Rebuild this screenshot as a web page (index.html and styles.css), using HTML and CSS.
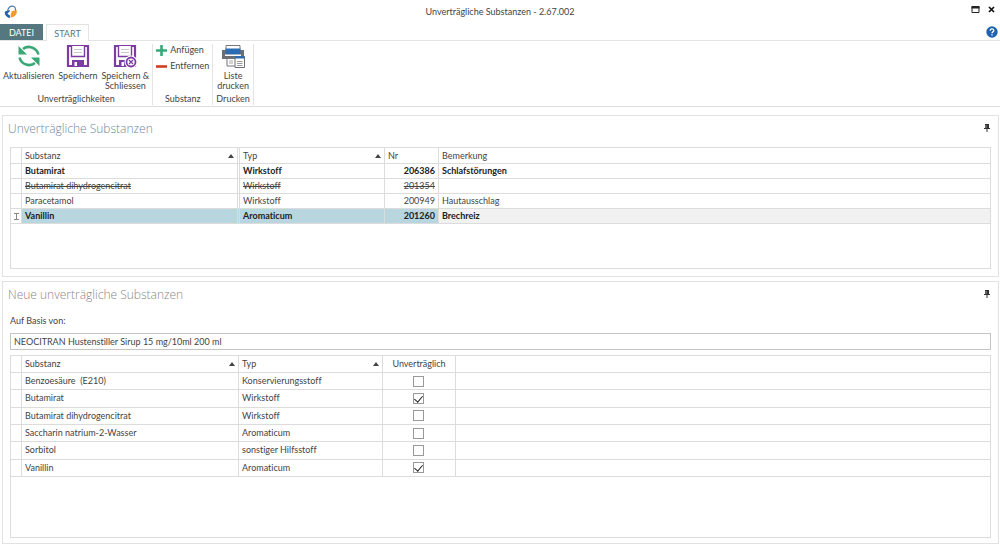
FILE: index.html
```html
<!DOCTYPE html>
<html lang="de">
<head>
    <meta charset="UTF-8">
    <title>Unverträgliche Substanzen</title>
    <link rel="stylesheet" href="styles.css">
</head>
<body>
<header class="titlebar">
    <svg class="app-logo" viewBox="0 0 14 14">
        <path d="M3.500 6.500C4 3.500 6 1.200 8.500 1.200c2.500 0 3.300 2 3 5" fill="none" stroke="#4f7ca8" stroke-width="1.200"/>
        <path d="M.8 6.500l5-1.500.2 8c-3.500-.8-5.500-3-5.200-6.500z" fill="#2463a8"/>
        <path d="M7 6.500L12.500 5c1.200 4-1.500 7-6 7.500z" fill="#f29a2e"/>
        <path d="M3.500 8.500l2-2 2.500.5-2.500 3.500z" fill="#fff"/>
    </svg>
    <h1>Unverträgliche Substanzen - 2.67.002</h1>
    <div class="window-buttons">
        <button type="button" aria-label="Maximieren"><svg viewBox="0 0 9 7"><path d="M1 1h7v5.500H1z" fill="#fff" stroke="#222"/><path d="M.5 0h8v2.500h-8z" fill="#222"/></svg></button>
        <button type="button" aria-label="Schliessen"><svg viewBox="0 0 9 7"><path d="M2 1l5 5M7 1L2 6" stroke="#111" stroke-width="1.700"/></svg></button>
    </div>
</header>
<nav class="tabs">
    <a class="tab tab-file" href="#">DATEI</a>
    <a class="tab tab-start" href="#">START</a>
    <button class="help" type="button" aria-label="Hilfe"><svg viewBox="0 0 12 12"><circle cx="6" cy="6" r="5.700" fill="#1f62ad"/><path d="M4.200 4.700C4.200 2.400 7.800 2.400 7.800 4.600 7.800 5.900 6 5.900 6 7.300M6 8.200v1.300" fill="none" stroke="#fff" stroke-width="1.300"/></svg></button>
</nav>
<div class="ribbon">
    <section class="group">
        <div class="group-tools">
            <button class="tool tool-refresh" type="button">
                <svg viewBox="0 0 24 24"><g fill="none" stroke="#3aa876" stroke-width="2.600"><path d="M6 5c5-4 13.500-2 15.500 5.500"/><path d="M18 19c-5 4-13.500 2-15.500-5.500"/></g><path d="M1.500 2v8.500H10L7 7.500l-2-2z" fill="#3aa876"/><path d="M22.500 22v-8.500H14l3 3 2 2z" fill="#3aa876"/></svg>
                Aktualisieren
            </button>
            <button class="tool tool-save" type="button">
                <svg viewBox="0 0 24 24"><path d="M2 2h20v20H2z" fill="#fff" stroke="#7d3ba4" stroke-width="2.200"/><path d="M5.500 2v10.500h13V2" fill="#fff" stroke="#7d3ba4" stroke-width="1.400"/><path d="M8 5.500h8M8 8.500h8" stroke="#c9c9c9"/><path d="M6 16h12v7H6z" fill="#7d3ba4"/><path d="M8.500 18H11v4H8.500z" fill="#fff"/></svg>
                Speichern
            </button>
            <button class="tool tool-save-close" type="button">
                <svg viewBox="0 0 24 24"><path d="M2 2h20v20H2z" fill="#fff" stroke="#7d3ba4" stroke-width="2.200"/><path d="M5.500 2v10.500h13V2" fill="#fff" stroke="#7d3ba4" stroke-width="1.400"/><path d="M8 5.500h8M8 8.500h8" stroke="#c9c9c9"/><path d="M6 16h9v7H6z" fill="#7d3ba4"/><path d="M8.500 18H11v4H8.500z" fill="#fff"/><circle cx="18" cy="18" r="6.500" fill="#fff"/><circle cx="18" cy="18" r="4.500" fill="#fff" stroke="#7d3ba4" stroke-width="1.800"/><path d="M16 16l4 4m0-4l-4 4" stroke="#7d3ba4" stroke-width="1.300"/></svg>
                Speichern &amp;<br>Schliessen
            </button>
        </div>
        <h2>Unverträglichkeiten</h2>
    </section>
    <section class="group">
        <div class="group-tools group-list">
            <button class="tool-small" type="button"><svg viewBox="0 0 11 11"><path d="M5.500 0v11M0 5.500h11" stroke="#3aa876" stroke-width="2.600"/></svg>Anfügen</button>
            <button class="tool-small" type="button"><svg viewBox="0 0 11 11"><path d="M0 5.500h11" stroke="#cf3f22" stroke-width="2.600"/></svg>Entfernen</button>
        </div>
        <h2>Substanz</h2>
    </section>
    <section class="group">
        <div class="group-tools">
            <button class="tool tool-print" type="button">
                <svg viewBox="0 0 24 24"><path d="M5 1.500h14v5H5z" fill="#fff" stroke="#777"/><path d="M1 6h22v9H1z" fill="#6b6f73"/><path d="M4.500 4.500h15v6h-15z" fill="#2c6cb5"/><path d="M4 10.500h16v1.500H4z" fill="#fff"/><path d="M6 14.500h9V22H6z" fill="#fff" stroke="#777"/><path d="M8 17h4M8 19h4" stroke="#aaa"/><path d="M14 12.500h9.500v11H14z" fill="#fff" stroke="#6b6f73"/><path d="M14 12h9.500v2.500H14z" fill="#2c6cb5"/><path d="M16 17.500h5.500M16 19.500h5.500M16 21.500h5.500" stroke="#999"/></svg>
                Liste<br>drucken
            </button>
        </div>
        <h2>Drucken</h2>
    </section>
</div>
<main>
    <section class="panel panel-known">
        <div class="panel-head">
            <h2>Unverträgliche Substanzen</h2>
            <button class="pin" type="button" aria-label="Anheften"><svg viewBox="0 0 6 8"><path d="M1 0h4v4h1v1H0V4h1z" fill="#333"/><path d="M3 5v3" stroke="#333"/><path d="M2 1v3" stroke="#999"/></svg></button>
        </div>
        <div class="grid">
            <table class="known">
                <colgroup><col class="col-mark"><col class="col-name"><col class="col-type"><col class="col-nr"><col></colgroup>
                <thead>
                <tr><th></th><th class="sorted">Substanz</th><th class="sorted">Typ</th><th>Nr</th><th>Bemerkung</th></tr>
                </thead>
                <tbody>
                <tr class="strong"><td></td><td>Butamirat</td><td>Wirkstoff</td><td class="nr">206386</td><td>Schlafstörungen</td></tr>
                <tr class="removed"><td></td><td>Butamirat dihydrogencitrat</td><td>Wirkstoff</td><td class="nr">201354</td><td></td></tr>
                <tr><td></td><td>Paracetamol</td><td>Wirkstoff</td><td class="nr">200949</td><td>Hautausschlag</td></tr>
                <tr class="strong selected"><td class="mark"><svg viewBox="0 0 5 7"><path d="M0 .5h5M0 6.500h5M2.500 0v7" stroke="#888"/></svg></td><td>Vanillin</td><td>Aromaticum</td><td class="nr">201260</td><td>Brechreiz</td></tr>
                </tbody>
            </table>
        </div>
    </section>
    <section class="panel panel-new">
        <div class="panel-head">
            <h2>Neue unverträgliche Substanzen</h2>
            <button class="pin" type="button" aria-label="Anheften"><svg viewBox="0 0 6 8"><path d="M1 0h4v4h1v1H0V4h1z" fill="#333"/><path d="M3 5v3" stroke="#333"/><path d="M2 1v3" stroke="#999"/></svg></button>
        </div>
        <label class="basis-label" for="basis">Auf Basis von:</label>
        <input class="basis" id="basis" type="text" value="NEOCITRAN Hustenstiller Sirup 15 mg/10ml 200 ml">
        <div class="grid">
            <table class="new">
                <colgroup><col class="col-mark"><col class="col-name"><col class="col-type"><col class="col-check"><col></colgroup>
                <thead>
                <tr><th></th><th class="sorted">Substanz</th><th class="sorted">Typ</th><th class="check">Unverträglich</th><th></th></tr>
                </thead>
                <tbody>
                <tr><td></td><td>Benzoesäure&nbsp; (E210)</td><td>Konservierungsstoff</td><td class="check"><input type="checkbox" aria-label="Benzoesäure"></td><td></td></tr>
                <tr><td></td><td>Butamirat</td><td>Wirkstoff</td><td class="check"><input type="checkbox" aria-label="Butamirat" checked></td><td></td></tr>
                <tr><td></td><td>Butamirat dihydrogencitrat</td><td>Wirkstoff</td><td class="check"><input type="checkbox" aria-label="Butamirat dihydrogencitrat"></td><td></td></tr>
                <tr><td></td><td>Saccharin natrium-2-Wasser</td><td>Aromaticum</td><td class="check"><input type="checkbox" aria-label="Saccharin"></td><td></td></tr>
                <tr><td></td><td>Sorbitol</td><td>sonstiger Hilfsstoff</td><td class="check"><input type="checkbox" aria-label="Sorbitol"></td><td></td></tr>
                <tr><td></td><td>Vanillin</td><td>Aromaticum</td><td class="check"><input type="checkbox" aria-label="Vanillin" checked></td><td></td></tr>
                </tbody>
            </table>
        </div>
    </section>
</main>
</body>
</html>
```
FILE: styles.css
```css
*{
    box-sizing: border-box;
}
body{
    margin: 0;
    min-height: 100vh;
    display: flex;
    flex-direction: column;
    background: #fff;
    color: #444;
    font: 9px/12px Lato, "Open Sans", sans-serif;
    font-variant-ligatures: none;
}
h1, h2{
    margin: 0;
    font-size: inherit;
    font-weight: normal;
}
button{
    padding: 0;
    border: 0;
    background: none;
    color: inherit;
    font: inherit;
    cursor: pointer;
}
svg{
    display: block;
}
.titlebar{
    display: grid;
    grid-template-columns: 1fr auto 1fr;
    align-items: center;
    height: 24px;
    padding: 0 4px;
}
.app-logo{
    width: 14px;
    height: 14px;
}
.window-buttons{
    display: flex;
    justify-content: flex-end;
    gap: 7px;
    padding-bottom: 5px;
}
.window-buttons svg{
    width: 9px;
    height: 7px;
}
.tabs{
    display: flex;
    height: 17px;
    border-bottom: 1px solid #e4e4e4;
}
.tab{
    height: 17px;
    line-height: 18px;
    text-align: center;
    text-decoration: none;
}
.tab-file{
    width: 43px;
    height: 16px;
    background: #557780;
    color: #fff;
}
.tab-start{
    width: 43px;
    margin-left: 3px;
    border: 1px solid #e4e4e4;
    border-bottom: 0;
    background: #fff;
    color: #557780;
    line-height: 17px;
}
.help{
    align-self: center;
    margin-left: auto;
    margin-right: 2px;
}
.help svg{
    width: 12px;
    height: 12px;
}
.ribbon{
    display: flex;
    height: 66px;
    border-bottom: 1px solid #dedede;
}
.group{
    display: flex;
    flex-direction: column;
    justify-content: space-between;
    margin: 3px 0 1px;
    padding: 0 3px;
    border-right: 1px solid #e4e4e4;
}
.group h2{
    text-align: center;
}
.group-tools{
    display: flex;
    align-items: flex-start;
    justify-content: center;
    gap: 4px;
}
.group-list{
    flex-direction: column;
}
.tool{
    line-height: 10px;
    white-space: nowrap;
}
.tool svg{
    width: 24px;
    height: 24px;
    margin: 0 auto 3px;
}
.tool-small{
    display: flex;
    align-items: center;
    gap: 3px;
}
.tool-small svg{
    width: 11px;
    height: 11px;
}
main{
    flex: 1;
    display: flex;
    flex-direction: column;
    gap: 4px;
    padding: 8px 1px 1px 2px;
}
.panel{
    display: flex;
    flex-direction: column;
    padding: 0 7px;
    border: 1px solid #e2e2e2;
}
.panel-known{
    height: 162px;
    padding-bottom: 7px;
}
.panel-new{
    flex: 1;
    padding-bottom: 5px;
}
.panel-head{
    display: flex;
    justify-content: space-between;
    height: 31px;
    margin-left: -2px;
}
.panel-head h2{
    color: #6d8a96;
    font: 300 12px/26px "Open Sans", sans-serif;
}
.panel-new h2{
    color: #888;
}
.pin{
    height: 8px;
    margin: 8px 1px 0 0;
}
.pin svg{
    width: 6px;
    height: 8px;
}
.grid{
    flex: 1;
    border: 1px solid #dcdcdc;
}
table{
    width: 100%;
    border-collapse: separate;
    border-spacing: 0;
    table-layout: fixed;
}
.new{
    height: 121px;
}
.col-mark{
    width: 11px;
}
.known .col-name{
    width: 218px;
}
.known .col-type{
    width: 145px;
}
.known .col-nr{
    width: 54px;
}
.new .col-name{
    width: 217px;
}
.new .col-type{
    width: 144px;
}
.new .col-check{
    width: 73px;
}
th, td{
    height: 15px;
    padding: 0 3px;
    border-right: 1px solid #dcdcdc;
    border-bottom: 1px solid #dcdcdc;
    font-weight: normal;
    line-height: 12px;
    text-align: left;
    white-space: nowrap;
}
th{
    height: 16px;
}
.new th, .new td{
    height: 17px;
}
th:last-child, td:last-child{
    border-right: 0;
}
.known th:nth-child(2), .known td:nth-child(2){
    border-right: 3px double #dcdcdc;
}
.sorted::after{
    content: "";
    float: right;
    margin-top: 4px;
    border: 3px solid transparent;
    border-top: 0;
    border-bottom: 4px solid #444;
}
.nr{
    text-align: right;
}
.strong td{
    color: #222;
    font-weight: bold;
}
.removed td{
    text-decoration: line-through;
}
.selected td{
    background: #b7d6e0;
}
.selected td:first-child{
    background: #fff;
}
.selected td:last-child{
    background: #f1f1f1;
}
.mark svg{
    width: 5px;
    height: 7px;
}
.basis-label{
    margin-top: 2px;
}
.basis{
    height: 17px;
    margin: 6px 0 5px;
    padding: 0 3px;
    border: 1px solid #c4c4c4;
    border-radius: 0;
    color: inherit;
    font: inherit;
}
.check{
    text-align: center;
}
td.check{
    padding-right: 5px;
}
.check input{
    appearance: none;
    display: block;
    width: 11px;
    height: 11px;
    margin: 0 auto;
    border: 1px solid #999;
    background: #fff;
}
.check input:checked::after{
    content: "";
    display: block;
    width: 4px;
    height: 7px;
    margin: 0 auto;
    border: solid #222;
    border-width: 0 1px 1px 0;
    transform: rotate(40deg);
}
```
